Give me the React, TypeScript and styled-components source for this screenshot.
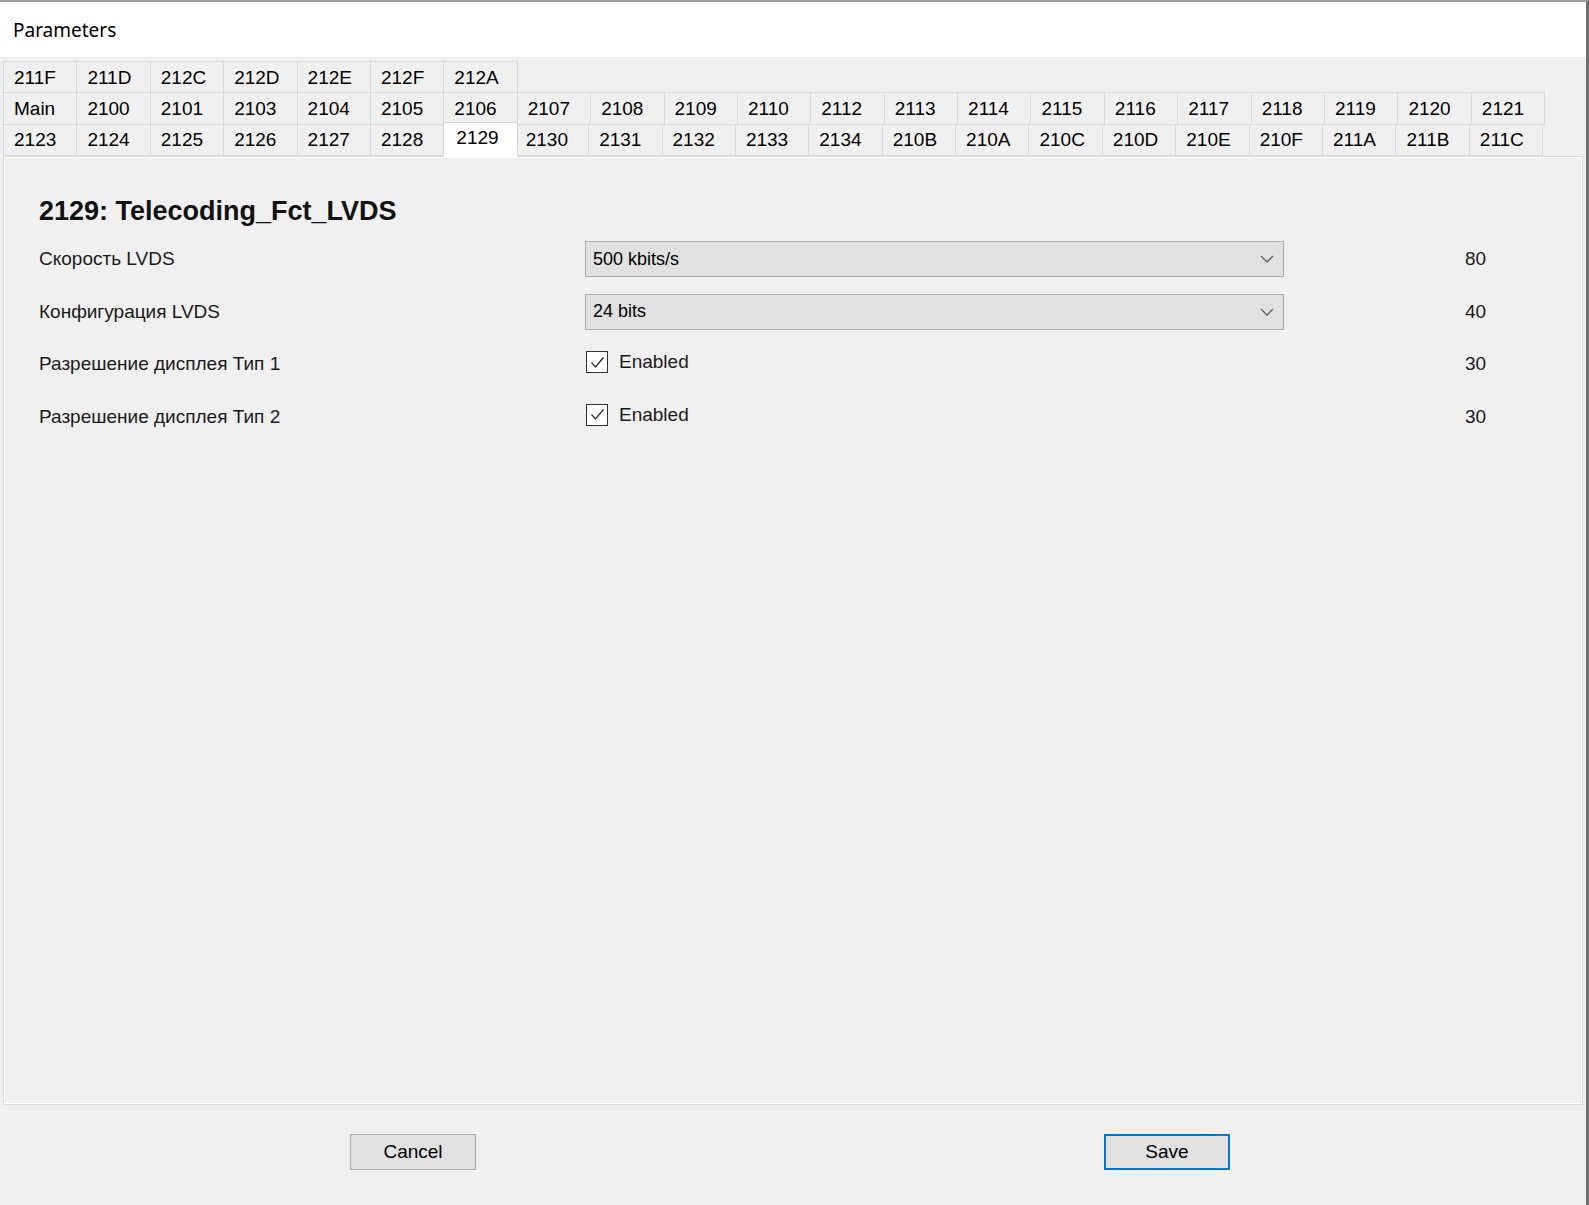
import React from 'react'
import styled, { createGlobalStyle } from 'styled-components'

const tabRows: string[][] = [
  ['211F', '211D', '212C', '212D', '212E', '212F', '212A'],
  ['Main', '2100', '2101', '2103', '2104', '2105', '2106', '2107', '2108', '2109', '2110',
    '2112', '2113', '2114', '2115', '2116', '2117', '2118', '2119', '2120', '2121'],
  ['2123', '2124', '2125', '2126', '2127', '2128', '2129', '2130', '2131', '2132', '2133',
    '2134', '210B', '210A', '210C', '210D', '210E', '210F', '211A', '211B', '211C'],
]

const activeTab = '2129'

type Param = {
  label: string
  kind: 'select' | 'check'
  value: string
  weight: number
}

const params: Param[] = [
  { label: 'Скорость LVDS', kind: 'select', value: '500 kbits/s', weight: 80 },
  { label: 'Конфигурация LVDS', kind: 'select', value: '24 bits', weight: 40 },
  { label: 'Разрешение дисплея Тип 1', kind: 'check', value: 'Enabled', weight: 30 },
  { label: 'Разрешение дисплея Тип 2', kind: 'check', value: 'Enabled', weight: 30 },
]

const Chevron = () => (
  <svg width="14" height="8" viewBox="0 0 14 8">
    <polyline points="1,1 7,7 13,1" fill="none" stroke="#606060" strokeWidth="1.3" />
  </svg>
)

const Tick = () => (
  <svg width="19" height="19" viewBox="0 0 19 19">
    <polyline points="3.5,9.5 7.5,14 15.5,4.5" fill="none" stroke="#333" strokeWidth="1.4" />
  </svg>
)

const App = () => {
  return (
    <>
      <GlobalStyle />
      <Window>
        <TitleBar>Parameters</TitleBar>
        <TabStrip>
          {tabRows.map((row, i) => (
            <TabRow key={i}>
              {row.map((name) => (
                <Tab key={name} $active={name === activeTab}>
                  {name}
                </Tab>
              ))}
            </TabRow>
          ))}
        </TabStrip>
        <Page>
          <Heading>2129: Telecoding_Fct_LVDS</Heading>
          <ParamGrid>
            {params.map((p) => (
              <React.Fragment key={p.label}>
                <Label>{p.label}</Label>
                <Cell>
                  {p.kind === 'select' ? (
                    <Select>
                      <span>{p.value}</span>
                      <Chevron />
                    </Select>
                  ) : (
                    <CheckLine>
                      <CheckBox>
                        <Tick />
                      </CheckBox>
                      {p.value}
                    </CheckLine>
                  )}
                </Cell>
                <Weight>{p.weight}</Weight>
              </React.Fragment>
            ))}
          </ParamGrid>
        </Page>
        <Footer>
          <Button>Cancel</Button>
          <Button $primary>Save</Button>
        </Footer>
      </Window>
    </>
  )
}

const GlobalStyle = createGlobalStyle`
  html, body {
    margin: 0;
    padding: 0;
    background: #f0f0f0;
    overflow: hidden;
  }
  body {
    font-family: "Liberation Sans", Arial, sans-serif;
    color: #000;
  }
`

const Window = styled.div`
  width: 1589px;
  height: 1205px;
  box-sizing: border-box;
  border-top: 2px solid #a0a0a0;
  border-right: 3px solid #6e6e6e;
  background: #f0f0f0;
  display: flex;
  flex-direction: column;
`

const TitleBar = styled.div`
  height: 55px;
  flex: none;
  background: #fff;
  display: flex;
  align-items: center;
  padding-left: 13px;
  font-family: "Noto Sans", "Open Sans", sans-serif;
  font-size: 19px;
  color: #000;
`

const TabStrip = styled.div`
  flex: none;
  padding: 4px 0 0 3px;
  display: flex;
  flex-direction: column;
`

const TabRow = styled.div`
  display: flex;
  & + & {
    margin-top: -1px;
  }
`

const Tab = styled.div<{ $active?: boolean }>`
  box-sizing: border-box;
  width: 74.4px;
  height: ${(p) => (p.$active ? '35px' : '32.4px')};
  margin: ${(p) => (p.$active ? '-2px -2px -2px -1px' : '0 0 0 -1px')};
  padding: ${(p) => (p.$active ? '4px 0 0 12px' : '1px 0 0 10px')};
  &:first-child {
    margin-left: 0;
  }
  border: 1px solid #d9d9d9;
  border-bottom-color: ${(p) => (p.$active ? '#fff' : '#d9d9d9')};
  background: ${(p) => (p.$active ? '#fff' : '#f0f0f0')};
  position: relative;
  z-index: ${(p) => (p.$active ? 2 : 0)};
  display: flex;
  align-items: ${(p) => (p.$active ? 'flex-start' : 'center')};
  font-size: 19px;
  color: #000;
  white-space: nowrap;
`

const Page = styled.div`
  flex: 1;
  margin: 0 3px 0 3px;
  box-sizing: border-box;
  border: 1px solid #d9d9d9;
  box-shadow: inset 1px 1px 0 #fff, inset -1px -1px 0 #fff;
  background: #f0f0f0;
  padding: 38px 0 0 35px;
  position: relative;
  z-index: 1;
`

const Heading = styled.div`
  height: 32px;
  line-height: 32px;
  font-size: 27px;
  font-weight: bold;
  color: #111;
  margin-bottom: 6px;
`

const ParamGrid = styled.div`
  display: grid;
  grid-template-columns: 546px 699px 1fr;
  grid-auto-rows: 52.4px;
  align-items: center;
`

const Label = styled.div`
  font-size: 19px;
  color: #1a1a1a;
`

const Cell = styled.div`
  display: flex;
  align-items: center;
`

const Select = styled.div`
  box-sizing: border-box;
  width: 100%;
  height: 36px;
  background: #e1e1e1;
  border: 1px solid #adadad;
  display: flex;
  align-items: center;
  justify-content: space-between;
  padding: 0 9px 0 7px;
  font-size: 18px;
  color: #000;
`

const CheckLine = styled.div`
  display: flex;
  align-items: center;
  gap: 11px;
  font-size: 19px;
  color: #1a1a1a;
  margin-top: -4px;
`

const CheckBox = styled.div`
  box-sizing: border-box;
  width: 22px;
  height: 22px;
  border: 1px solid #333;
  background: #fff;
  display: flex;
  align-items: center;
  justify-content: center;
  margin-left: 1px;
`

const Weight = styled.div`
  padding-left: 181px;
  font-size: 19px;
  color: #1a1a1a;
`

const Footer = styled.div`
  flex: none;
  height: 100px;
  box-sizing: border-box;
  padding: 29px 0 0 350px;
  display: flex;
  align-items: flex-start;
  gap: 628px;
`

const Button = styled.div<{ $primary?: boolean }>`
  box-sizing: border-box;
  width: 126px;
  height: 36px;
  background: #e1e1e1;
  border: ${(p) => (p.$primary ? '2px solid #0078d7' : '1px solid #adadad')};
  display: flex;
  align-items: center;
  justify-content: center;
  font-size: 19px;
  color: #000;
`

export default App
